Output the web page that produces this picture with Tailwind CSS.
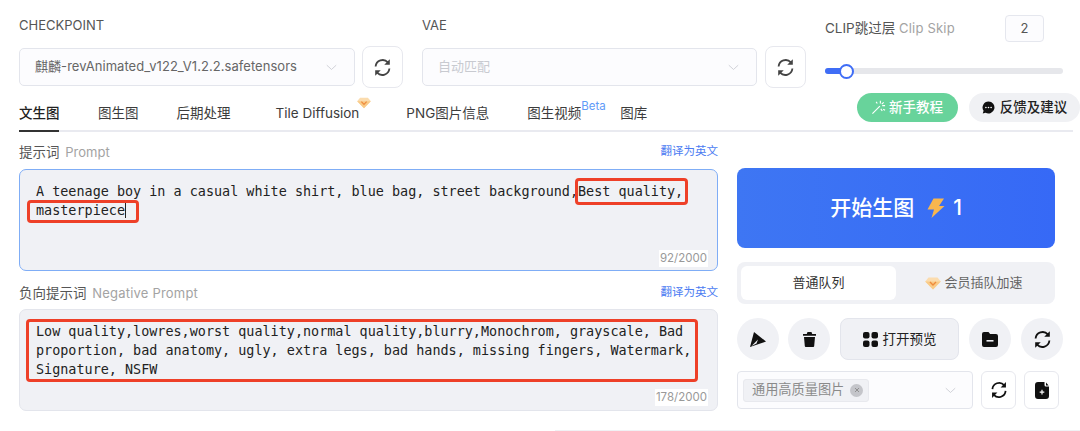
<!DOCTYPE html>
<html lang="zh"><head><meta charset="utf-8">
<script src="https://cdn.jsdelivr.net/npm/@tailwindcss/browser@4"></script>
</head>
<body class="bg-white">
<svg class="hidden" width="0" height="0"><defs>
<symbol id="rf" viewBox="0 0 24 24"><path d="M4.8 11A7.4 7.4 0 0 1 17.6 6.6" fill="none" stroke="currentColor" stroke-width="1.9"/><path d="M19.6 3.4v5.8h-5.8z" fill="currentColor"/><path d="M19.2 13A7.4 7.4 0 0 1 6.4 17.4" fill="none" stroke="currentColor" stroke-width="1.9"/><path d="M4.4 20.6v-5.8h5.8z" fill="currentColor"/></symbol>
<symbol id="ch" viewBox="0 0 14 8"><path d="M1 1l6 5.5L13 1" fill="none" stroke="currentColor" stroke-width="1"/></symbol>
<symbol id="dm" viewBox="0 0 16 13"><path d="M3.5 .5h9L15.8 4.6 8 12.6.2 4.6z" fill="#fbdcae"/><path d="M.2 4.6h15.6L8 12.6z" fill="#f9cb88"/><path d="M5 5l3 3 3-3" fill="none" stroke="#ee8a3c" stroke-width="1.4"/></symbol>
</defs></svg>
<div class="w-[1080px] h-[431px] overflow-hidden relative text-[13px] text-[#444] font-['Inter','Noto_Sans_CJK_SC',sans-serif]">
  <div class="pl-[19px]">
    <!-- top row -->
    <div class="flex h-[93px]">
      <div class="w-[403px] pt-[15px]">
        <div class="h-[20px] leading-[20px] text-[13px] text-[#555]">CHECKPOINT</div>
        <div class="flex items-center gap-[7px] mt-[11px]">
          <div class="w-[336px] h-[38px] rounded-[5px] border border-[#e3e5ec] bg-[#fcfcfe] flex items-center justify-between pl-[15px] pr-[17px] text-[13px] text-[#666]"><span class="tracking-[.05px]">麒麟-revAnimated_v122_V1.2.2.safetensors</span><svg class="w-[11px] h-[7px] text-[#c5c7ce]"><use href="#ch"/></svg></div>
          <div class="w-[41px] h-[42px] rounded-[8px] border border-[#e7e8ee] bg-white flex items-center justify-center text-[#444]"><svg class="w-[23px] h-[23px]"><use href="#rf"/></svg></div>
        </div>
      </div>
      <div class="w-[403px] pt-[15px] ml-[0px]">
        <div class="h-[20px] leading-[20px] text-[13px] text-[#555]">VAE</div>
        <div class="flex items-center gap-[8px] mt-[11px]">
          <div class="w-[335px] h-[38px] rounded-[5px] border border-[#e3e5ec] bg-[#fcfcfe] flex items-center justify-between pl-[15px] pr-[17px] text-[13px] text-[#c8cad0]"><span>自动匹配</span><svg class="w-[11px] h-[7px] text-[#c5c7ce]"><use href="#ch"/></svg></div>
          <div class="w-[41px] h-[42px] rounded-[8px] border border-[#e7e8ee] bg-white flex items-center justify-center text-[#444]"><svg class="w-[23px] h-[23px]"><use href="#rf"/></svg></div>
        </div>
      </div>
      <div class="w-[238px] pt-[15px]">
        <div class="flex items-center justify-between h-[27px] pr-[19px]">
          <div class="text-[13.5px] text-[#555]">CLIP跳过层 <span class="text-[#a3a3a3] text-[13px] tracking-[.2px]">Clip Skip</span></div>
          <div class="w-[39px] h-[27px] rounded-[4px] border border-[#e5e7ee] bg-[#fcfcfe] flex items-center justify-center text-[13px] text-[#555]">2</div>
        </div>
        <div class="relative h-[6px] mt-[26px] rounded-full bg-[#e6e7eb]">
          <div class="absolute left-0 top-0 h-[6px] w-[20px] rounded-full bg-[#3f6df6]"></div>
          <div class="absolute left-[14px] top-[-4px] w-[15px] h-[15px] rounded-full bg-white border-[2px] border-[#3f6df6]"></div>
        </div>
      </div>
    </div>
    <!-- tabs -->
    <div class="flex w-[1054px] h-[39px] border-b-[2px] border-[#e9eaf0] text-[13.5px] text-[#3c3c3c]">
      <div class="h-[39px] w-[40px] border-b-[2px] border-[#333] font-medium text-[#222] pt-[9px] leading-[22px] whitespace-nowrap">文生图</div>
      <div class="ml-[39px] pt-[9px] leading-[22px]">图生图</div>
      <div class="ml-[38px] pt-[9px] leading-[22px]">后期处理</div>
      <div class="ml-[45px] pt-[9px] leading-[22px] relative whitespace-nowrap">Tile Diffusion<svg class="absolute right-[-12px] top-[4px] w-[14px] h-[12px]"><use href="#dm"/></svg></div>
      <div class="ml-[47px] pt-[9px] leading-[22px] whitespace-nowrap">PNG图片信息</div>
      <div class="ml-[38px] pt-[9px] leading-[22px] relative whitespace-nowrap">图生视频<span class="absolute left-[54px] top-[6px] text-[11.5px] leading-[14px] text-[#5f9bf8]">Beta</span></div>
      <div class="ml-[39px] pt-[9px] leading-[22px]">图库</div>
      <div class="ml-auto flex gap-[11px] mr-[-7px] shrink-0">
        <div class="w-[101px] h-[29px] rounded-full bg-[#68d39b] text-white flex items-center justify-center gap-[3px] text-[13.5px] font-medium pr-[1px]">
          <svg class="w-[15px] h-[15px]" viewBox="0 0 16 16" fill="none" stroke="#fff" stroke-width="1.2"><path d="M1.5 14.5L9.5 6.5"/><path d="M10 .8v3M15 6h-3M13.5 2.5l-2 2M5.5 2l1.2 1.8M15 11l-2-1.2M10.5 9.5l1.5 2.2"/></svg>新手教程</div>
        <div class="w-[111px] h-[29px] rounded-full bg-[#f0f1f4] text-[#222] flex items-center justify-center gap-[5px] text-[13.5px] font-medium">
          <svg class="w-[13px] h-[13px]" viewBox="0 0 14 14"><path d="M7 .5a6.5 6.5 0 1 1-3.2 12.2L.8 13.4l.9-2.8A6.5 6.5 0 0 1 7 .5z" fill="#111"/><circle cx="4.2" cy="7" r=".9" fill="#fff"/><circle cx="7" cy="7" r=".9" fill="#fff"/><circle cx="9.8" cy="7" r=".9" fill="#fff"/></svg>反馈及建议</div>
      </div>
    </div>
    <!-- main -->
    <div class="flex gap-[19px]">
      <div class="w-[699px]">
        <div class="h-[37px] flex items-center justify-between pt-[3px]">
          <div class="text-[13.5px] text-[#555]">提示词 <span class="text-[#a3a3a3] ml-[2px] text-[13px]">Prompt</span></div>
          <div class="text-[11.5px] text-[#4d7df2]">翻译为英文</div>
        </div>
        <div class="relative h-[102px] rounded-[7px] border border-[#7fadf6] bg-[#f0f1f5] pl-[16px] pt-[12px] font-['DejaVu_Sans_Mono',monospace] text-[13.45px] leading-[19px] text-[#222] whitespace-pre">A teenage boy in a casual white shirt, blue bag, street background,Best quality,<br>masterpiece
          <div class="absolute left-[105px] top-[32px] w-px h-[16px] bg-[#222]"></div>
          <div class="absolute left-[555px] top-[8px] w-[113px] h-[27px] rounded-[4px] border-[3px] border-[#ee4028]"></div>
          <div class="absolute left-[7px] top-[30px] w-[112px] h-[23px] rounded-[4px] border-[3px] border-[#ee4028]"></div>
          <div class="absolute right-[9px] bottom-[3px] bg-white px-px h-[17px] leading-[17px] font-['Inter',sans-serif] text-[11.5px] text-[#999]">92/2000</div>
        </div>
        <div class="h-[38px] flex items-center justify-between pt-[6px]">
          <div class="text-[13.5px] text-[#555]">负向提示词 <span class="text-[#a3a3a3] ml-[2px] text-[13px] tracking-[.2px]">Negative Prompt</span></div>
          <div class="text-[11.5px] text-[#4d7df2]">翻译为英文</div>
        </div>
        <div class="relative h-[102px] rounded-[7px] border border-[#e3e5ec] bg-[#f0f1f5] pl-[16px] pt-[12px] font-['DejaVu_Sans_Mono',monospace] text-[13.45px] leading-[19px] text-[#222] whitespace-pre">Low quality,lowres,worst quality,normal quality,blurry,Monochrom, grayscale, Bad<br>proportion, bad anatomy, ugly, extra legs, bad hands, missing fingers, Watermark,<br>Signature, NSFW
          <div class="absolute left-[6px] top-[9px] w-[672px] h-[63px] rounded-[4px] border-[3px] border-[#ee4028]"></div>
          <div class="absolute right-[9px] bottom-[4px] bg-white px-px h-[17px] leading-[17px] font-['Inter',sans-serif] text-[11.5px] text-[#999]">178/2000</div>
        </div>
      </div>
      <div class="w-[318px] pt-[36px]">
        <div class="h-[80px] rounded-[8px] bg-gradient-to-r from-[#3e76f3] to-[#3669f6] flex items-center justify-center text-white text-[21px] font-medium">
          <span>开始生图</span>
          <svg class="w-[18px] h-[20px] ml-[13px]" viewBox="0 0 18 20"><path d="M6.5 .5h10.5L12 8h5.5L4.5 20l2.5-8.5H.5z" fill="#f8b64e"/></svg>
          <span class="ml-[8px]">1</span>
        </div>
        <div class="mt-[14px] h-[42px] rounded-[8px] bg-[#f0f1f5] p-[4px] flex text-[13px]">
          <div class="w-[155px] h-[34px] rounded-[6px] bg-white flex items-center justify-center text-[#333]">普通队列</div>
          <div class="flex-1 flex items-center justify-center text-[#666] gap-[3px] pl-[1px]"><svg class="w-[16px] h-[13px]"><use href="#dm"/></svg>会员插队加速</div>
        </div>
        <div class="mt-[14px] flex w-[326px]">
          <div class="w-[42px] h-[42px] rounded-full bg-[#f0f1f5] flex items-center justify-center"><svg class="w-[16px] h-[15px]" viewBox="0 0 16 15"><path d="M4 0L16 9.5 0 15z" fill="#111"/><path d="M1.5 14L8 7.5 6.5 11.5z" fill="#f0f1f5"/></svg></div>
          <div class="ml-[9px] w-[42px] h-[42px] rounded-full bg-[#f0f1f5] flex items-center justify-center"><svg class="w-[13px] h-[15px]" viewBox="0 0 13 15"><path d="M4.5 0h4l.7 2H13v1.8H0V2h3.8zM1 5h11l-.8 9a1 1 0 0 1-1 1H2.8a1 1 0 0 1-1-1z" fill="#111"/></svg></div>
          <div class="ml-[10px] w-[119px] h-[42px] rounded-[8px] border border-[#e3e5ec] bg-[#f0f1f5] flex items-center justify-center gap-[5px] text-[13.5px] text-[#222]"><svg class="w-[15px] h-[15px]" viewBox="0 0 15 15" fill="#111"><rect width="6.5" height="6.5" rx="2"/><rect x="8.5" width="6.5" height="6.5" rx="2"/><rect y="8.5" width="6.5" height="6.5" rx="2"/><rect x="8.5" y="8.5" width="6.5" height="6.5" rx="2"/></svg>打开预览</div>
          <div class="ml-[10px] w-[42px] h-[42px] rounded-full bg-[#f0f1f5] flex items-center justify-center"><svg class="w-[16px] h-[15px]" viewBox="0 0 16 15"><path d="M2 0h4.5l1.6 2H14a2 2 0 0 1 2 2V13a2 2 0 0 1-2 2H2a2 2 0 0 1-2-2V2a2 2 0 0 1 2-2z" fill="#111"/><rect x="4.5" y="8" width="7" height="1.6" fill="#f0f1f5"/></svg></div>
          <div class="ml-[10px] w-[42px] h-[42px] rounded-full bg-[#f0f1f5] flex items-center justify-center text-[#111]"><svg class="w-[23px] h-[23px]"><use href="#rf"/></svg></div>
        </div>
        <div class="mt-[11px] flex w-[322px]">
          <div class="w-[236px] h-[38px] rounded-[4px] border border-[#e3e5ec] bg-[#fcfcfe] flex items-center justify-between pl-[5px] pr-[16px]">
            <div class="h-[23px] rounded-[3px] bg-[#f0f1f5] border border-[#e8e9ee] flex items-center pl-[8px] pr-[5px] gap-[6px] text-[13.2px] text-[#8a8a8a]">通用高质量图片<span class="w-[13px] h-[13px] rounded-full bg-[#c4c5ca] flex items-center justify-center"><svg class="w-[6px] h-[6px]" viewBox="0 0 6 6"><path d="M1 1l4 4M5 1L1 5" stroke="#8a8a8a" stroke-width=".9"/></svg></span></div>
            <svg class="w-[11px] h-[7px] text-[#c5c7ce]"><use href="#ch"/></svg>
          </div>
          <div class="ml-[8px] w-[35px] h-[38px] rounded-[6px] border border-[#e7e8ee] bg-white flex items-center justify-center text-[#111]"><svg class="w-[22px] h-[22px]"><use href="#rf"/></svg></div>
          <div class="ml-[8px] w-[35px] h-[38px] rounded-[6px] border border-[#e7e8ee] bg-white flex items-center justify-center"><svg class="w-[14px] h-[17px]" viewBox="0 0 14 17"><path d="M3 0h6.5L9.5 3a1.5 1.5 0 0 0 1.5 1.5h3V14a3 3 0 0 1-3 3H3a3 3 0 0 1-3-3V3a3 3 0 0 1 3-3z" fill="#111"/><path d="M11 .5L13.6 3.4H11z" fill="#111"/><path d="M7 7.8v4.6M4.7 10.1h4.6" stroke="#fff" stroke-width="1.2"/></svg></div>
        </div>
      </div>
    </div>
  </div>
  <div class="absolute left-[555px] right-0 bottom-0 h-px bg-[#f0f1f4]"></div>
</div>
</body></html>
